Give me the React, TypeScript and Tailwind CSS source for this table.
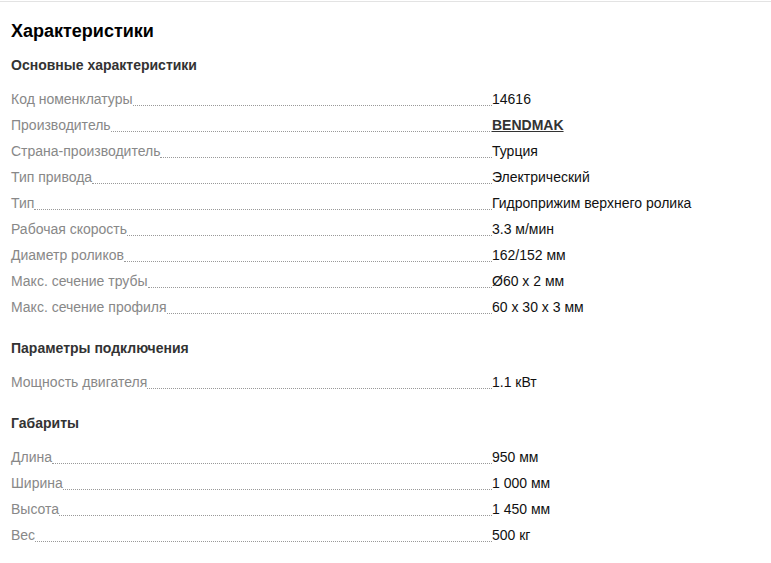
const sections: { title: string; rows: [string, string, boolean?][] }[] = [
	{
		title: "Основные характеристики",
		rows: [
			["Код номенклатуры", "14616"],
			["Производитель", "BENDMAK", true],
			["Страна-производитель", "Турция"],
			["Тип привода", "Электрический"],
			["Тип", "Гидроприжим верхнего ролика"],
			["Рабочая скорость", "3.3 м/мин"],
			["Диаметр роликов", "162/152 мм"],
			["Макс. сечение трубы", "Ø60 x 2 мм"],
			["Макс. сечение профиля", "60 x 30 x 3 мм"],
		],
	},
	{
		title: "Параметры подключения",
		rows: [["Мощность двигателя", "1.1 кВт"]],
	},
	{
		title: "Габариты",
		rows: [
			["Длина", "950 мм"],
			["Ширина", "1 000 мм"],
			["Высота", "1 450 мм"],
			["Вес", "500 кг"],
		],
	},
];

const App = () => {
	return (
		<div className="mt-px min-h-[562px] border-t border-[#e3e3e3] bg-white px-[11px] pt-[16px] font-['Liberation_Sans',Arial,sans-serif]">
			<h2 className="text-[18px] font-bold leading-[26px] text-black">Характеристики</h2>
			<div className="flex flex-col gap-[15px] pt-[8px]">
				{sections.map((section) => (
					<div key={section.title}>
						<h3 className="mb-[8px] text-[14px] font-bold leading-[26px] text-[#333]">{section.title}</h3>
						{section.rows.map(([label, value, link]) => (
							<div className="flex h-[26px] text-[14px] leading-[26px]" key={label}>
								<div className="flex w-[481px] shrink-0">
									<span className="text-[#888]">{label}</span>
									<span className="mb-[6px] flex-1 border-b border-dotted border-[#999]" />
								</div>
								{link ? (
									<a className="font-bold text-[#333] underline" href="#">
										{value}
									</a>
								) : (
									<span className="text-[#111]">{value}</span>
								)}
							</div>
						))}
					</div>
				))}
			</div>
		</div>
	);
};

export default App;
